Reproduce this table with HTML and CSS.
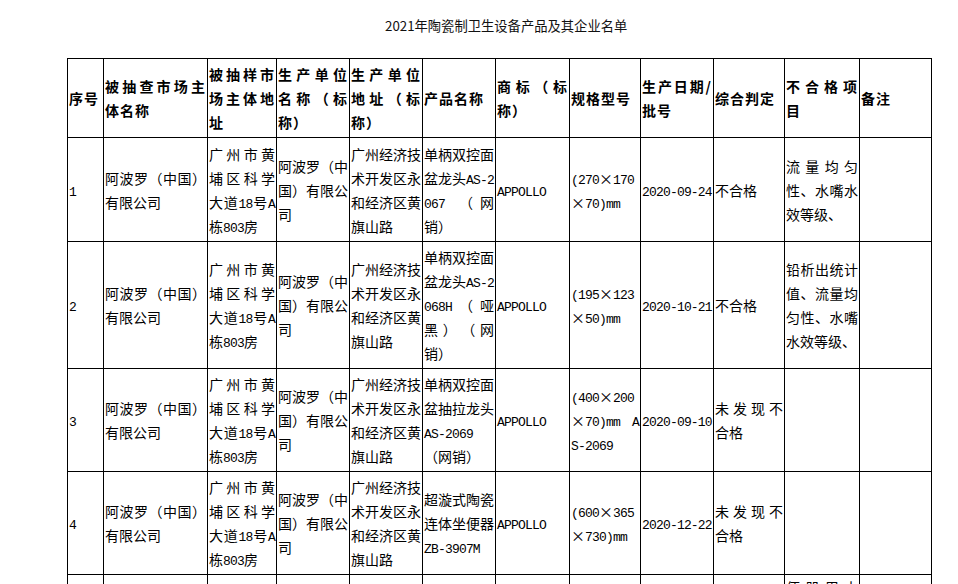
FILE: index.html
```html
<!DOCTYPE html>
<html lang="zh-CN">
<head>
<meta charset="utf-8">
<title>2021年陶瓷制卫生设备产品及其企业名单</title>
<link rel="stylesheet" href="styles.css">
</head>
<body>
<div class="title">2021年陶瓷制卫生设备产品及其企业名单</div>
<table class="list">
  <colgroup>
    <col class="c1"><col class="c2"><col class="c3"><col class="c4"><col class="c5"><col class="c6">
    <col class="c7"><col class="c8"><col class="c9"><col class="c10"><col class="c11"><col class="c12">
  </colgroup>
  <tr class="h-head">
    <th>序号</th>
    <th>被抽查市场主体名称</th>
    <th>被抽样市场主体地址</th>
    <th>生产单位名称（标称）</th>
    <th>生产单位地址（标称）</th>
    <th>产品名称</th>
    <th>商标（标称）</th>
    <th>规格型号</th>
    <th>生产日期/批号</th>
    <th>综合判定</th>
    <th>不合格项目</th>
    <th>备注</th>
  </tr>
  <tr class="h-104">
    <td><span class="lat">1</span></td>
    <td>阿波罗（中国）有限公司</td>
    <td>广州市黄埔区科学大道<span class="lat">18</span>号<span class="lat">A</span>栋<span class="lat">803</span>房</td>
    <td>阿波罗（中国）有限公司</td>
    <td>广州经济技术开发区永和经济区黄旗山路</td>
    <td>单柄双控面盆龙头<span class="lat">AS-2067 </span>（网销）</td>
    <td><span class="lat">APPOLLO</span></td>
    <td><span class="lat">(270</span><span class="x">×</span><span class="lat">170</span><span class="x">×</span><span class="lat">70)mm</span></td>
    <td><span class="lat">2020-09-24</span></td>
    <td>不合格</td>
    <td>流量均匀性、水嘴水效等级、</td>
    <td></td>
  </tr>
  <tr class="h-127">
    <td><span class="lat">2</span></td>
    <td>阿波罗（中国）有限公司</td>
    <td>广州市黄埔区科学大道<span class="lat">18</span>号<span class="lat">A</span>栋<span class="lat">803</span>房</td>
    <td>阿波罗（中国）有限公司</td>
    <td>广州经济技术开发区永和经济区黄旗山路</td>
    <td>单柄双控面盆龙头<span class="lat">AS-2068H</span>（哑黑）（网销）</td>
    <td><span class="lat">APPOLLO</span></td>
    <td><span class="lat">(195</span><span class="x">×</span><span class="lat">123</span><span class="x">×</span><span class="lat">50)mm</span></td>
    <td><span class="lat">2020-10-21</span></td>
    <td>不合格</td>
    <td>铅析出统计值、流量均匀性、水嘴水效等级、</td>
    <td></td>
  </tr>
  <tr class="h-103">
    <td><span class="lat">3</span></td>
    <td>阿波罗（中国）有限公司</td>
    <td>广州市黄埔区科学大道<span class="lat">18</span>号<span class="lat">A</span>栋<span class="lat">803</span>房</td>
    <td>阿波罗（中国）有限公司</td>
    <td>广州经济技术开发区永和经济区黄旗山路</td>
    <td>单柄双控面盆抽拉龙头<span class="lat">AS-2069</span>（网销）</td>
    <td><span class="lat">APPOLLO</span></td>
    <td><span class="lat">(400</span><span class="x">×</span><span class="lat">200</span><span class="x">×</span><span class="lat">70)mm AS-2069</span></td>
    <td><span class="lat">2020-09-10</span></td>
    <td>未发现不合格</td>
    <td></td>
    <td></td>
  </tr>
  <tr class="h-103">
    <td><span class="lat">4</span></td>
    <td>阿波罗（中国）有限公司</td>
    <td>广州市黄埔区科学大道<span class="lat">18</span>号<span class="lat">A</span>栋<span class="lat">803</span>房</td>
    <td>阿波罗（中国）有限公司</td>
    <td>广州经济技术开发区永和经济区黄旗山路</td>
    <td>超漩式陶瓷连体坐便器<span class="lat">ZB-3907M</span></td>
    <td><span class="lat">APPOLLO</span></td>
    <td><span class="lat">(600</span><span class="x">×</span><span class="lat">365</span><span class="x">×</span><span class="lat">730)mm</span></td>
    <td><span class="lat">2020-12-22</span></td>
    <td>未发现不合格</td>
    <td></td>
    <td></td>
  </tr>
  <tr>
    <td><span class="lat">5</span></td>
    <td>阿波罗（中国）有限公司</td>
    <td>广州市黄埔区科学大道<span class="lat">18</span>号<span class="lat">A</span>栋<span class="lat">803</span>房</td>
    <td>阿波罗（中国）有限公司</td>
    <td>广州经济技术开发区永和经济区黄旗山路</td>
    <td>连体坐便器<span class="lat">ZB-3905M</span></td>
    <td><span class="lat">APPOLLO</span></td>
    <td><span class="lat">(700</span><span class="x">×</span><span class="lat">380</span><span class="x">×</span><span class="lat">780)mm</span></td>
    <td><span class="lat">2020-11-16</span></td>
    <td>不合格</td>
    <td class="top">便器用水量、冲洗功能、水封回复、管道输送特性、防虹吸功能、</td>
    <td></td>
  </tr>
</table>
</body>
</html>
```

FILE: styles.css
```css
html, body {
  margin: 0;
  padding: 0;
  background: #fff;
}

body {
  font-family: "Noto Sans CJK SC", sans-serif;
  color: #000;
}

.title {
  padding: 16px 0 0 385px;
  height: 20px;
  font-size: 13.3px;
  line-height: 20px;
  color: #111;
}

.list {
  margin: 22px 0 0 67px;
  width: 864px;
  border-collapse: collapse;
  table-layout: fixed;
}

.c1 { width: 36px; }
.c2 { width: 104px; }
.c3 { width: 69px; }
.c4 { width: 73px; }
.c5 { width: 73px; }
.c6 { width: 73px; }
.c7 { width: 74px; }
.c8 { width: 71px; }
.c9 { width: 73px; }
.c10 { width: 71px; }
.c11 { width: 75px; }
.c12 { width: 72px; }

.list th,
.list td {
  border: 1px solid #000;
  padding: 3px 1px;
  font-size: 14px;
  line-height: 24px;
  text-align: justify;
  vertical-align: middle;
  word-break: break-all;
  text-spacing-trim: space-all;
  overflow: hidden;
}

.list th {
  font-weight: bold;
  letter-spacing: 1px;
}

.list td.top {
  vertical-align: top;
  padding-top: 0;
}

.h-head { height: 79px; }
.h-104 { height: 104px; }
.h-127 { height: 127px; }
.h-103 { height: 103px; }

.lat {
  font-family: "Liberation Mono", monospace;
  font-size: 13px;
  letter-spacing: -0.82px;
  line-height: 1;
}

.x {
  display: inline-block;
  width: 14px;
  text-align: center;
  font-size: 14px;
  line-height: 1;
}
```
